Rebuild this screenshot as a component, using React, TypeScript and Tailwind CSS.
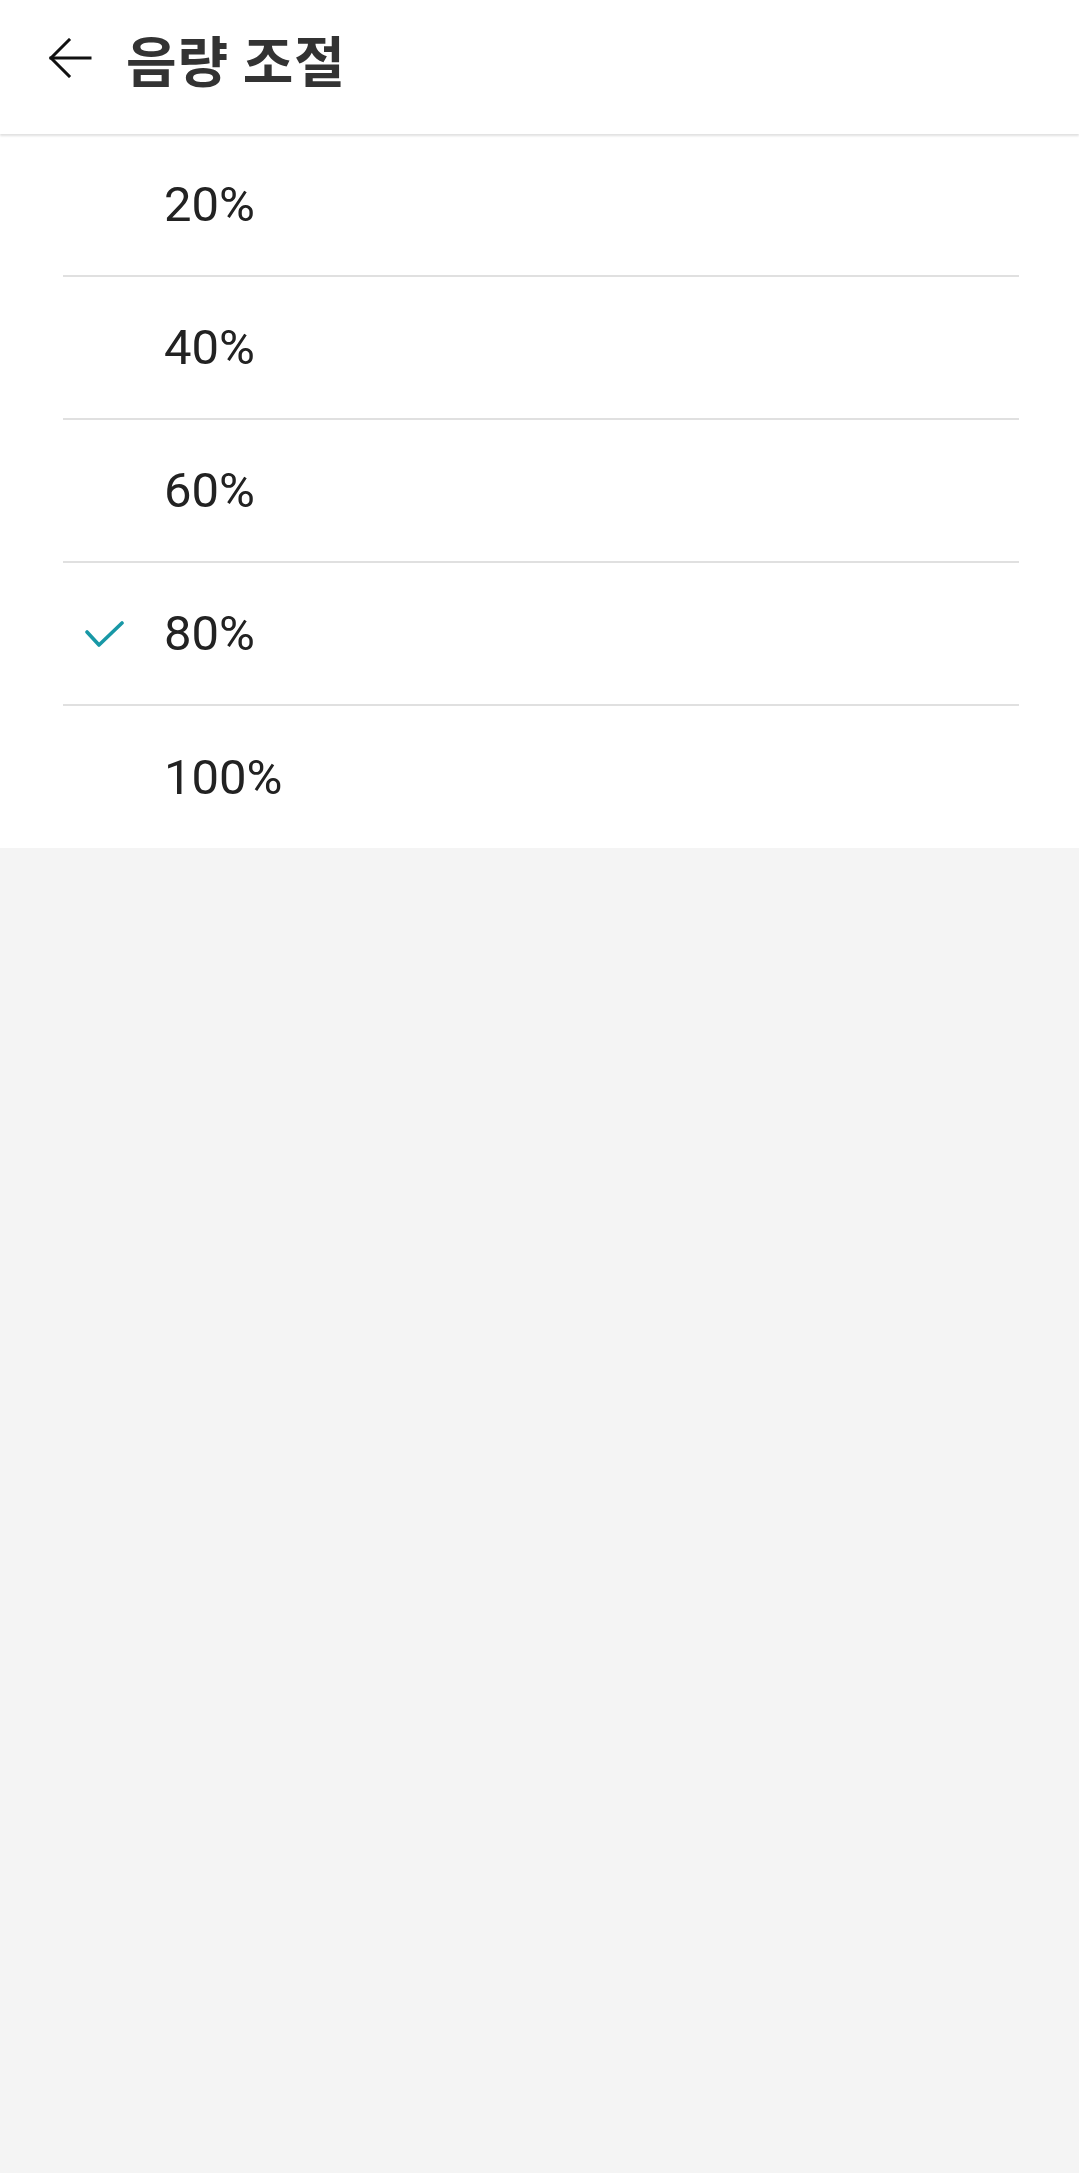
import { Fragment } from 'react';

const levels = ['20%', '40%', '60%', '80%', '100%'];
const selected = '80%';

function BackArrow() {
    return (
        <svg width="44" height="40" viewBox="0 0 44 40" fill="none" stroke="#111" strokeWidth="3" strokeLinecap="square">
            <path d="M3 20 H42" />
            <path d="M21 2 L3 20 L21 38" />
        </svg>
    );
}

function Check() {
    return (
        <svg width="40" height="28" viewBox="0 0 40 28" fill="none" stroke="#1898a6" strokeWidth="3.6" strokeLinecap="round" strokeLinejoin="round">
            <path d="M2 11 L14 24 L37 2" />
        </svg>
    );
}

export default function App() {
    return (
        <div className="min-h-[2173px] w-full bg-[#f4f4f4]" style={{ fontFamily: 'Roboto, "Noto Sans CJK KR", sans-serif' }}>
            <header className="h-[134px] bg-white flex items-center pl-[48px] gap-[34px] shadow-[0_2px_2px_rgba(0,0,0,0.12)] relative z-10 pb-[18px]">
                <BackArrow />
                <h1 className="text-[55px] font-bold text-[#333] tracking-[1px] leading-none" style={{ fontFamily: '"Noto Sans CJK KR", sans-serif' }}>
                    음량 조절
                </h1>
            </header>
            <ul className="bg-white">
                {levels.map((l, i) => (
                    <Fragment key={l}>
                        <li className={`${i === levels.length - 1 ? 'h-[142px]' : 'h-[141px]'} flex items-center pl-[85px]`}>
                            <div className="w-[79px] flex items-center pt-[2px]">
                                {l === selected && <Check />}
                            </div>
                            <span className="text-[49px] text-[#222] leading-none">{l}</span>
                        </li>
                        {i < levels.length - 1 && <li className="ml-[63px] mr-[60px] h-[2px] bg-[#e0e0e0]" />}
                    </Fragment>
                ))}
            </ul>
        </div>
    );
}
